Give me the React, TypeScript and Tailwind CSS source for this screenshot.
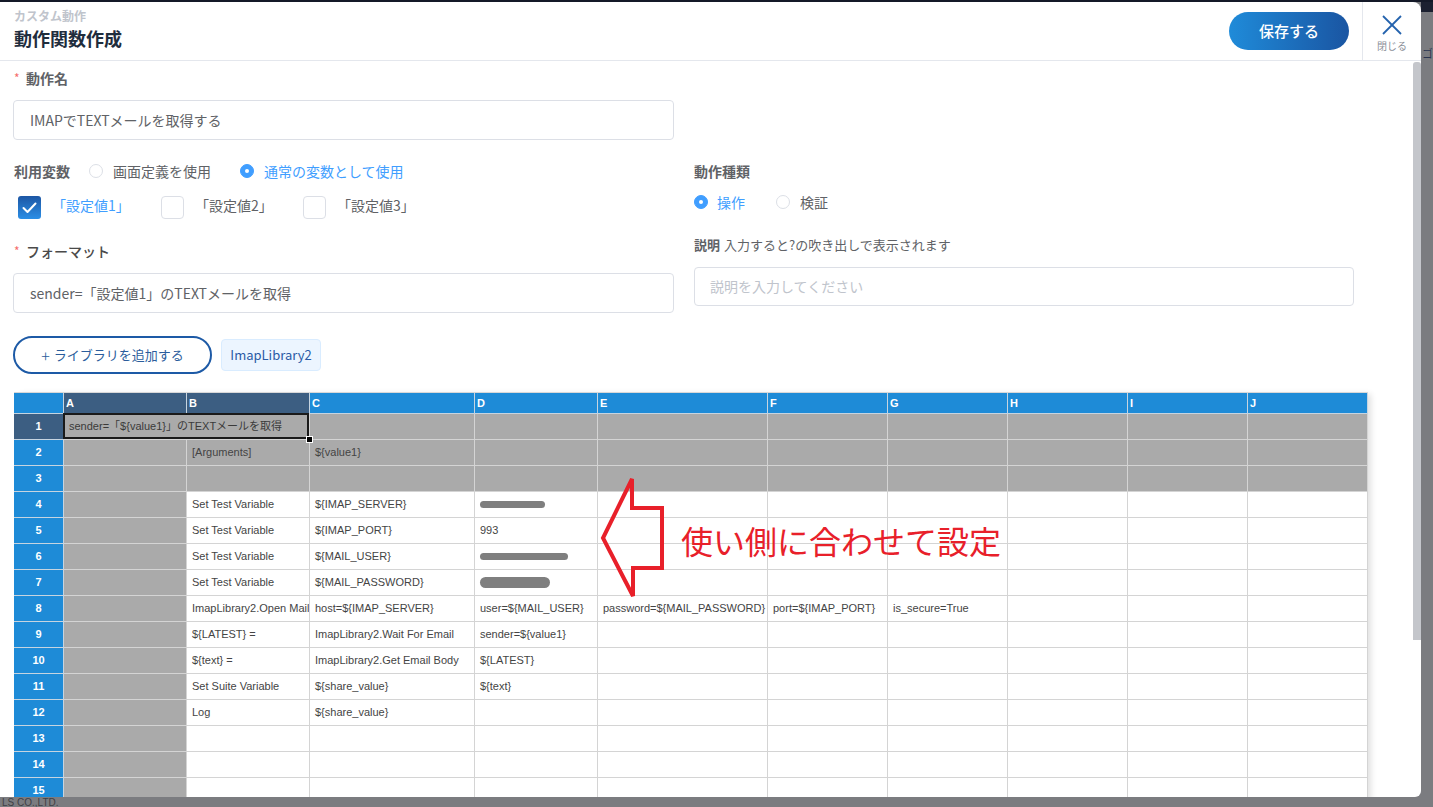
import React from "react";

const colW = [123, 123, 165, 123, 170, 120, 120, 120, 120, 120];
const letters = ["A", "B", "C", "D", "E", "F", "G", "H", "I", "J"];

type Blob = { blob: number; h: number };
type CellV = string | Blob | null;

const data: Record<number, CellV[]> = {
  2: [null, "[Arguments]", "${value1}"],
  4: [null, "Set Test Variable", "${IMAP_SERVER}", { blob: 65, h: 7 }],
  5: [null, "Set Test Variable", "${IMAP_PORT}", "993"],
  6: [null, "Set Test Variable", "${MAIL_USER}", { blob: 88, h: 7 }],
  7: [null, "Set Test Variable", "${MAIL_PASSWORD}", { blob: 70, h: 11 }],
  8: [
    null,
    "ImapLibrary2.Open Mail",
    "host=${IMAP_SERVER}",
    "user=${MAIL_USER}",
    "password=${MAIL_PASSWORD}",
    "port=${IMAP_PORT}",
    "is_secure=True",
  ],
  9: [null, "${LATEST} =", "ImapLibrary2.Wait For Email", "sender=${value1}"],
  10: [null, "${text} =", "ImapLibrary2.Get Email Body", "${LATEST}"],
  11: [null, "Set Suite Variable", "${share_value}", "${text}"],
  12: [null, "Log", "${share_value}"],
};

function Radio({ checked }: { checked: boolean }) {
  return checked ? (
    <span className="block w-[14px] h-[14px] rounded-full bg-[#409eff] border border-[#409eff] flex items-center justify-center shrink-0">
      <span className="block w-[4px] h-[4px] rounded-full bg-white" />
    </span>
  ) : (
    <span className="block w-[14px] h-[14px] rounded-full bg-white border border-[#dcdfe6] shrink-0" />
  );
}

function Checkbox({ checked }: { checked: boolean }) {
  return checked ? (
    <span className="w-[23px] h-[23px] rounded-[3px] bg-[linear-gradient(180deg,#1d56a4,#2b8fe6)] flex items-center justify-center shrink-0">
      <svg width="15" height="12" viewBox="0 0 15 12" fill="none">
        <polyline points="1.5,6 5.5,10 13.5,1.5" stroke="white" strokeWidth="2" strokeLinecap="round" strokeLinejoin="round" />
      </svg>
    </span>
  ) : (
    <span className="block w-[23px] h-[23px] rounded-[4px] bg-white border border-[#dcdfe6] shrink-0" />
  );
}

function Grid() {
  const rows = Array.from({ length: 15 }, (_, i) => i + 1);
  return (
    <div className="relative w-[1354px] ml-[1px] mt-[18px] border-t border-[#d8d8d8] shadow-[5px_0_6px_-2px_rgba(0,0,0,0.12)] font-['Liberation_Sans','Noto_Sans_CJK_JP',sans-serif] text-[11px]">
      {/* header */}
      <div className="flex h-[21px]">
        <div className="w-[50px] h-full bg-[#1e8bd7] border-r border-b border-[#c6d4e0]" />
        {letters.map((l, i) => (
          <div
            key={l}
            style={{ width: colW[i] }}
            className={`h-full border-r border-b border-[#c6d4e0] text-white font-bold pl-[2px] flex items-center ${
              i < 2 ? "bg-[#3c5e82]" : "bg-[#1e8bd7]"
            }`}
          >
            {l}
          </div>
        ))}
      </div>
      {rows.map((r) => {
        const gray = r <= 3;
        const vals = data[r] || [];
        return (
          <div key={r} className="flex h-[26px]">
            <div
              className={`w-[50px] h-full border-r border-b border-[#c6d4e0] text-white font-bold flex items-center justify-center ${
                r === 1 ? "bg-[#3c5e82]" : "bg-[#1e8bd7]"
              }`}
            >
              {r}
            </div>
            {r === 1 ? (
              <>
                <div
                  style={{ width: colW[0] + colW[1] }}
                  className="relative h-full border-r border-b border-[#d4d4d4] bg-[#aaaaaa] text-[#3a3a3a] pl-[5px] flex items-center whitespace-nowrap"
                >
                  sender=「${"{"}value1{"}"}」のTEXTメールを取得
                  <div className="absolute -left-[1px] -top-[1px] right-0 bottom-0 border-2 border-[#1a1a1a] pointer-events-none" />
                  <div className="absolute -right-[4px] -bottom-[4px] w-[7px] h-[7px] bg-black border border-white z-10" />
                </div>
                {colW.slice(2).map((w, i) => (
                  <div key={i} style={{ width: w }} className="h-full border-r border-b border-[#d4d4d4] bg-[#aaaaaa]" />
                ))}
              </>
            ) : (
              colW.map((w, i) => {
                const v = vals[i];
                const isGray = gray || i === 0;
                return (
                  <div
                    key={i}
                    style={{ width: w }}
                    className={`h-full border-r border-b border-[#d4d4d4] pl-[5px] flex items-center whitespace-nowrap overflow-hidden text-[#444] ${
                      isGray ? "bg-[#aaaaaa]" : "bg-white"
                    }`}
                  >
                    {typeof v === "string" ? (
                      v
                    ) : v ? (
                      <span
                        style={{ width: v.blob, height: v.h }}
                        className="inline-block rounded-full bg-[#7f7f7f]"
                      />
                    ) : null}
                  </div>
                );
              })
            )}
          </div>
        );
      })}
      {/* annotation arrow */}
      <svg
        className="absolute left-[584px] top-[82px]"
        width="70"
        height="128"
        viewBox="0 0 70 128"
        fill="none"
      >
        <polygon
          points="34,4 34,33 64,33 64,93 35,93 35,121 5,63"
          stroke="#e8202a"
          strokeWidth="4"
          strokeLinejoin="miter"
        />
      </svg>
      <div className="absolute left-[667px] top-[131px] text-[32px] leading-[32px] text-[#e8202a] whitespace-nowrap font-['Noto_Sans_CJK_JP',sans-serif]">
        使い側に合わせて設定
      </div>
    </div>
  );
}

export default function App() {
  return (
    <div className="w-[1433px] h-[807px] overflow-hidden bg-[#7b7c80] flex flex-col font-['Noto_Sans_CJK_JP','Noto_Sans',sans-serif]">
      <div className="h-[2px] bg-[#141928] shrink-0" />
      <div className="flex shrink-0">
        <div className="w-[1421px] shrink-0 h-[795px] bg-white rounded-tr-[8px] rounded-br-[6px] overflow-hidden flex flex-col">
          {/* header */}
          <div className="h-[59px] border-b border-[#e4e7ed] flex shrink-0">
            <div className="flex-1 pl-[14px] pt-[6px]">
              <div className="text-[12px] leading-[16px] font-bold text-[#c0c4cc]">カスタム動作</div>
              <div className="text-[18px] leading-[24px] font-bold text-[#1f2d3d] mt-[2px]">動作関数作成</div>
            </div>
            <div className="flex items-center pr-[13px]">
              <div className="w-[120px] h-[38px] rounded-full bg-[linear-gradient(90deg,#1f8bd9,#1a55a2)] text-white text-[15px] font-medium flex items-center justify-center">
                保存する
              </div>
            </div>
            <div className="w-[59px] border-l border-[#e4e7ed] flex flex-col items-center pt-[13px]">
              <svg width="20" height="20" viewBox="0 0 20 20" fill="none">
                <line x1="1" y1="1" x2="19" y2="19" stroke="#2462ad" strokeWidth="1.8" />
                <line x1="19" y1="1" x2="1" y2="19" stroke="#2462ad" strokeWidth="1.8" />
              </svg>
              <div className="mt-[4px] text-[10px] leading-[14px] text-[#8b8f98]">閉じる</div>
            </div>
          </div>
          {/* body */}
          <div className="flex-1 flex overflow-hidden">
            <div className="flex-1 px-[13px] pt-[7px] overflow-hidden">
              <div className="h-[20px] flex items-center text-[14px] font-bold text-[#606266]">
                <span className="w-[13px] text-[#f56c6c] text-[12px] font-normal pl-[1px]">*</span>動作名
              </div>
              <div className="mt-[12px] w-[661px] h-[40px] border border-[#dcdfe6] rounded-[4px] pl-[16px] flex items-center text-[14px] text-[#606266]">
                IMAPでTEXTメールを取得する
              </div>

              <div className="mt-[21px] flex gap-[20px] items-start">
                {/* left */}
                <div className="w-[661px]">
                  <div className="h-[20px] flex items-center text-[14px]">
                    <span className="font-bold text-[#606266] pl-[1px]">利用変数</span>
                    <span className="ml-[19px]"><Radio checked={false} /></span>
                    <span className="ml-[10px] text-[#606266]">画面定義を使用</span>
                    <span className="ml-[29px]"><Radio checked /></span>
                    <span className="ml-[10px] text-[#409eff]">通常の変数として使用</span>
                  </div>
                  <div className="mt-[15px] h-[23px] flex pl-[5px] text-[14px]">
                    <div className="w-[143px] flex items-start">
                      <Checkbox checked />
                      <span className="ml-[11px] leading-[18px] text-[#409eff]">「設定値1」</span>
                    </div>
                    <div className="w-[142px] flex items-start">
                      <Checkbox checked={false} />
                      <span className="ml-[11px] leading-[18px] text-[#606266]">「設定値2」</span>
                    </div>
                    <div className="flex items-start">
                      <Checkbox checked={false} />
                      <span className="ml-[11px] leading-[18px] text-[#606266]">「設定値3」</span>
                    </div>
                  </div>
                  <div className="mt-[22px] h-[20px] flex items-center text-[14px] text-[#4a4a4a]">
                    <span className="w-[13px] text-[#f56c6c] text-[12px] pl-[1px]">*</span>
                    <span className="font-medium">フォーマット</span>
                  </div>
                  <div className="mt-[12px] w-[661px] h-[40px] border border-[#dcdfe6] rounded-[4px] pl-[16px] flex items-center text-[14px] text-[#606266]">
                    sender=「設定値1」のTEXTメールを取得
                  </div>
                </div>
                {/* right */}
                <div className="w-[660px]">
                  <div className="h-[20px] flex items-center text-[14px] font-bold text-[#606266]">動作種類</div>
                  <div className="mt-[11px] h-[20px] flex items-center text-[14px]">
                    <Radio checked />
                    <span className="ml-[9px] text-[#409eff]">操作</span>
                    <span className="ml-[31px]"><Radio checked={false} /></span>
                    <span className="ml-[10px] text-[#606266]">検証</span>
                  </div>
                  <div className="mt-[23px] h-[20px] flex items-center text-[13px] text-[#606266]">
                    <span className="font-bold">説明</span>
                    <span className="ml-[4px]">入力すると?の吹き出しで表示されます</span>
                  </div>
                  <div className="mt-[12px] w-[660px] h-[39px] border border-[#dcdfe6] rounded-[4px] pl-[15px] flex items-center text-[14px] text-[#c0c4cc]">
                    説明を入力してください
                  </div>
                </div>
              </div>

              <div className="mt-[23px] h-[38px] flex items-center gap-[9px]">
                <div className="w-[199px] h-[38px] rounded-full border-2 border-[#1d5aa6] flex items-center justify-center text-[13px] text-[#2b5d9c]">
                  <span className="text-[16px] leading-[16px] mr-[4px] font-light">+</span>ライブラリを追加する
                </div>
                <div className="w-[100px] h-[32px] rounded-[4px] bg-[#ecf5ff] border border-[#d9ecff] flex items-center justify-center text-[13px] text-[#2a5aa5]">
                  ImapLibrary2
                </div>
              </div>

              <Grid />
            </div>
            <div className="w-[8px] shrink-0">
              <div className="mt-[1px] h-[578px] w-[8px] rounded-t-[3px] bg-[#c4c6cb]" />
            </div>
          </div>
        </div>
        <div className="flex-1 min-w-0 overflow-hidden flex flex-col">
          <div className="h-[10px] bg-[#1b2030]" />
          <div className="mt-[33px] text-[11px] text-[#2a3550] whitespace-nowrap pl-[1px]">ゴリ</div>
        </div>
      </div>
      <div className="flex-1 overflow-hidden">
        <div className="text-[10px] leading-[12px] text-[#3f4045] pl-[2px] font-['Liberation_Sans',sans-serif]">LS CO.,LTD.</div>
      </div>
    </div>
  );
}
